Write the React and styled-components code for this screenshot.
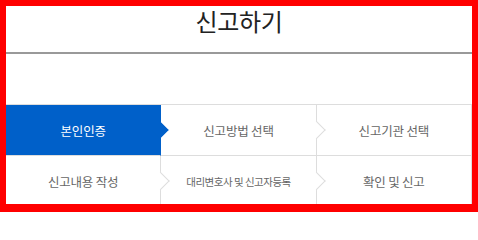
import styled, { createGlobalStyle } from "styled-components";

const GlobalStyle = createGlobalStyle`
  html, body {
    margin: 0;
    padding: 0;
    background: #fff;
  }
  body {
    font-family: "Noto Sans CJK KR", "Noto Sans", sans-serif;
  }
`;

const steps = [
  { label: "본인인증", active: true, arrow: true },
  { label: "신고방법 선택", arrow: true },
  { label: "신고기관 선택" },
  { label: "신고내용 작성", arrow: true },
  { label: "대리변호사 및 신고자등록", arrow: true, small: true },
  { label: "확인 및 신고" },
];

export default function App() {
  return (
    <>
      <GlobalStyle />
      <Frame>
        <Header>
          <h1>신고하기</h1>
        </Header>
        <Spacer />
        <StepGrid>
          {steps.map((step) => (
            <Step
              key={step.label}
              $active={step.active}
              $arrow={step.arrow}
              $small={step.small}
            >
              {step.label}
            </Step>
          ))}
        </StepGrid>
      </Frame>
    </>
  );
}

// ---------------------css

const Frame = styled.div`
  width: 478px;
  height: 212px;
  box-sizing: border-box;
  border: 6px solid #ff0000;
  border-bottom-width: 8px;
  overflow: hidden;
  background: #fff;
`;

const Header = styled.header`
  height: 46px;
  border-bottom: 2px solid #999999;
  display: flex;
  justify-content: center;
  h1 {
    margin: 0;
    padding-top: 1px;
    font-size: 24px;
    font-weight: 400;
    line-height: 28px;
    letter-spacing: -0.3px;
    color: #222;
  }
`;

const Spacer = styled.div`
  height: 50px;
`;

const StepGrid = styled.ol`
  list-style: none;
  margin: 0;
  padding: 0;
  display: grid;
  grid-template-columns: repeat(3, 1fr);
  grid-auto-rows: 51px;
  border-top: 1px solid #dddddd;
`;

const Step = styled.li`
  position: relative;
  display: flex;
  align-items: center;
  justify-content: center;
  box-sizing: border-box;
  border-right: 1px solid ${(p) => (p.$active ? "#0060c9" : "#dddddd")};
  border-bottom: 1px solid #dddddd;
  background: ${(p) => (p.$active ? "#0060c9" : "#fff")};
  color: ${(p) => (p.$active ? "#fff" : "#666")};
  font-size: ${(p) => (p.$small ? "10.5px" : "12.5px")};
  letter-spacing: ${(p) => (p.$small ? "-0.5px" : "-0.2px")};
  &::after {
    content: "";
    display: ${(p) => (p.$arrow ? "block" : "none")};
    position: absolute;
    z-index: 1;
    top: 50%;
    right: ${(p) => (p.$active ? "-6px" : "-7px")};
    width: ${(p) => (p.$active ? "12px" : "13px")};
    height: ${(p) => (p.$active ? "12px" : "13px")};
    box-sizing: border-box;
    background: ${(p) => (p.$active ? "#0060c9" : "#fff")};
    border-top: 1px solid ${(p) => (p.$active ? "#0060c9" : "#dddddd")};
    border-right: 1px solid ${(p) => (p.$active ? "#0060c9" : "#dddddd")};
    transform: translateY(-50%) rotate(45deg);
  }
`;
